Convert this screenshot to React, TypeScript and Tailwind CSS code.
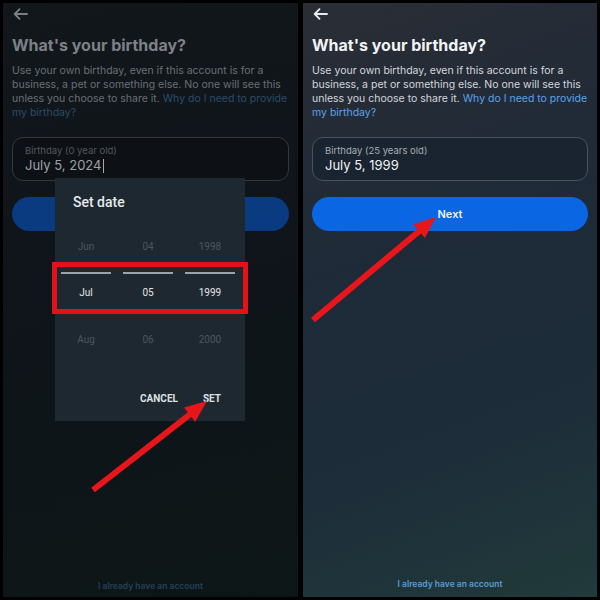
const fontApp = { fontFamily: "Inter, 'Noto Sans', sans-serif" };

const pickerCols = [
  ["Jun", "Jul", "Aug"],
  ["04", "05", "06"],
  ["1998", "1999", "2000"],
];

function BackArrow({ color }: { color: string }) {
  return (
    <svg width="15" height="12" viewBox="0 0 15 12" fill="none">
      <path
        d="M14 6H2M6.5 1.2L1.7 6l4.8 4.8"
        stroke={color}
        strokeWidth="1.8"
        strokeLinecap="round"
        strokeLinejoin="round"
      />
    </svg>
  );
}

function Arrow({ x1, y1, x2, y2 }: { x1: number; y1: number; x2: number; y2: number }) {
  const len = Math.hypot(x2 - x1, y2 - y1);
  const ux = (x2 - x1) / len;
  const uy = (y2 - y1) / len;
  const head = 22;
  const half = 9;
  const bx = x2 - ux * head;
  const by = y2 - uy * head;
  const p1 = `${bx - uy * half},${by + ux * half}`;
  const p2 = `${bx + uy * half},${by - ux * half}`;
  return (
    <g>
      <line x1={x1} y1={y1} x2={bx + ux * 2} y2={by + uy * 2} stroke="#e8161b" strokeWidth="6" />
      <polygon points={`${x2},${y2} ${p1} ${p2}`} fill="#e8161b" />
    </g>
  );
}

function Screen({ dim }: { dim: boolean }) {
  return (
    <div className="flex h-full flex-col px-[9px]" style={fontApp}>
      <div className="pl-[1px] pt-[5px]">
        <BackArrow color={dim ? "#7c8086" : "#e9ecef"} />
      </div>
      <h1
        className={`mt-[14px] text-[16px] font-bold leading-[22px] ${dim ? "text-[#7d8187]" : "text-[#f1f3f5]"}`}
      >
        What&apos;s your birthday?
      </h1>
      <p
        className={`mt-[8px] text-[10.5px] leading-[14px] ${dim ? "text-[#6a6f75]" : "text-[#d3d7dc]"}`}
      >
        Use your own birthday, even if this account is for a business, a pet or
        something else. No one will see this unless you choose to share it.{" "}
        <span className={dim ? "text-[#2b4b6c]" : "text-[#5aa2ec]"}>
          Why do I need to provide my birthday?
        </span>
      </p>
      <div
        className={`mt-[17px] h-[44px] rounded-[11px] border px-[12px] pt-[6px] ${dim ? "border-[#33383e] bg-[#0d1115]" : "border-[#46525d] bg-[#1a2430]"}`}
      >
        <div className={`text-[9.5px] leading-[13px] ${dim ? "text-[#52575d]" : "text-[#a4abb3]"}`}>
          {dim ? "Birthday (0 year old)" : "Birthday (25 years old)"}
        </div>
        <div
          className={`flex items-center text-[13px] leading-[17px] ${dim ? "text-[#9ea2a6]" : "text-[#f1f3f5]"}`}
        >
          {dim ? "July 5, 2024" : "July 5, 1999"}
          {dim && <span className="ml-[1px] inline-block h-[14px] w-[1.5px] bg-[#a7abaf]" />}
        </div>
      </div>
      <div
        className={`mt-[16px] flex h-[34px] items-center justify-center rounded-full text-[11px] font-semibold ${dim ? "bg-[#0a3a80] text-[#7d8b9c]" : "bg-[#0b66e4] text-[#eef4ff]"}`}
      >
        Next
      </div>
      <div className="flex-1" />
      <div
        className={`text-center text-[8.5px] font-semibold ${dim ? "pb-[4px] text-[#25405c]" : "pb-[6px] text-[#5b9bd8]"}`}
      >
        I already have an account
      </div>
    </div>
  );
}

function DateDialog() {
  return (
    <div
      className="absolute left-[52px] top-[175px] h-[243px] w-[190px] bg-[#1e2830]"
      style={{ fontFamily: "Roboto, 'Noto Sans', sans-serif" }}
    >
      <div className="pl-[18px] pt-[15px] text-[14px] font-medium leading-[18px] text-[#e6e9ec]">
        Set date
      </div>
      <div className="mt-[29px] grid grid-cols-[50px_50px_50px] gap-x-[12px] pl-[6px]">
        {pickerCols.map((col) => (
          <div key={col[0]} className="flex flex-col items-center">
            <div className="text-[10px] leading-[14px] text-[#4b5761]">{col[0]}</div>
            <div className="mt-[18px] h-[2px] w-full bg-[#9aa2aa]" />
            <div className="mt-[12px] text-[10px] leading-[14px] text-[#e3e6e9]">{col[1]}</div>
            <div className="mt-[33px] text-[10px] leading-[14px] text-[#4b5761]">{col[2]}</div>
          </div>
        ))}
      </div>
      <div className="mt-[44px] flex justify-end gap-[25px] pr-[24px] text-[10px] font-bold text-[#dde0e3]">
        <span>CANCEL</span>
        <span>SET</span>
      </div>
    </div>
  );
}

export default function App() {
  return (
    <div className="relative flex h-[600px] w-[600px] gap-[5px] bg-black p-[3px]">
      <div className="relative h-[594px] w-[295px] bg-[linear-gradient(165deg,#12171c_0%,#0e1419_50%,#0d1617_100%)]">
        <Screen dim />
        <DateDialog />
        <div className="absolute left-[49px] top-[259px] h-[52px] w-[196px] border-[5px] border-[#e3121a]" />
      </div>
      <div className="relative h-[594px] w-[294px] bg-[linear-gradient(160deg,#2a2d35_0%,#1e2a38_40%,#1d2d3a_70%,#213a3a_100%)]">
        <Screen dim={false} />
      </div>
      <svg className="pointer-events-none absolute left-0 top-0" width="600" height="600">
        <Arrow x1={93} y1={490} x2={207} y2={401} />
        <Arrow x1={313} y1={320} x2={436} y2={217} />
      </svg>
    </div>
  );
}
